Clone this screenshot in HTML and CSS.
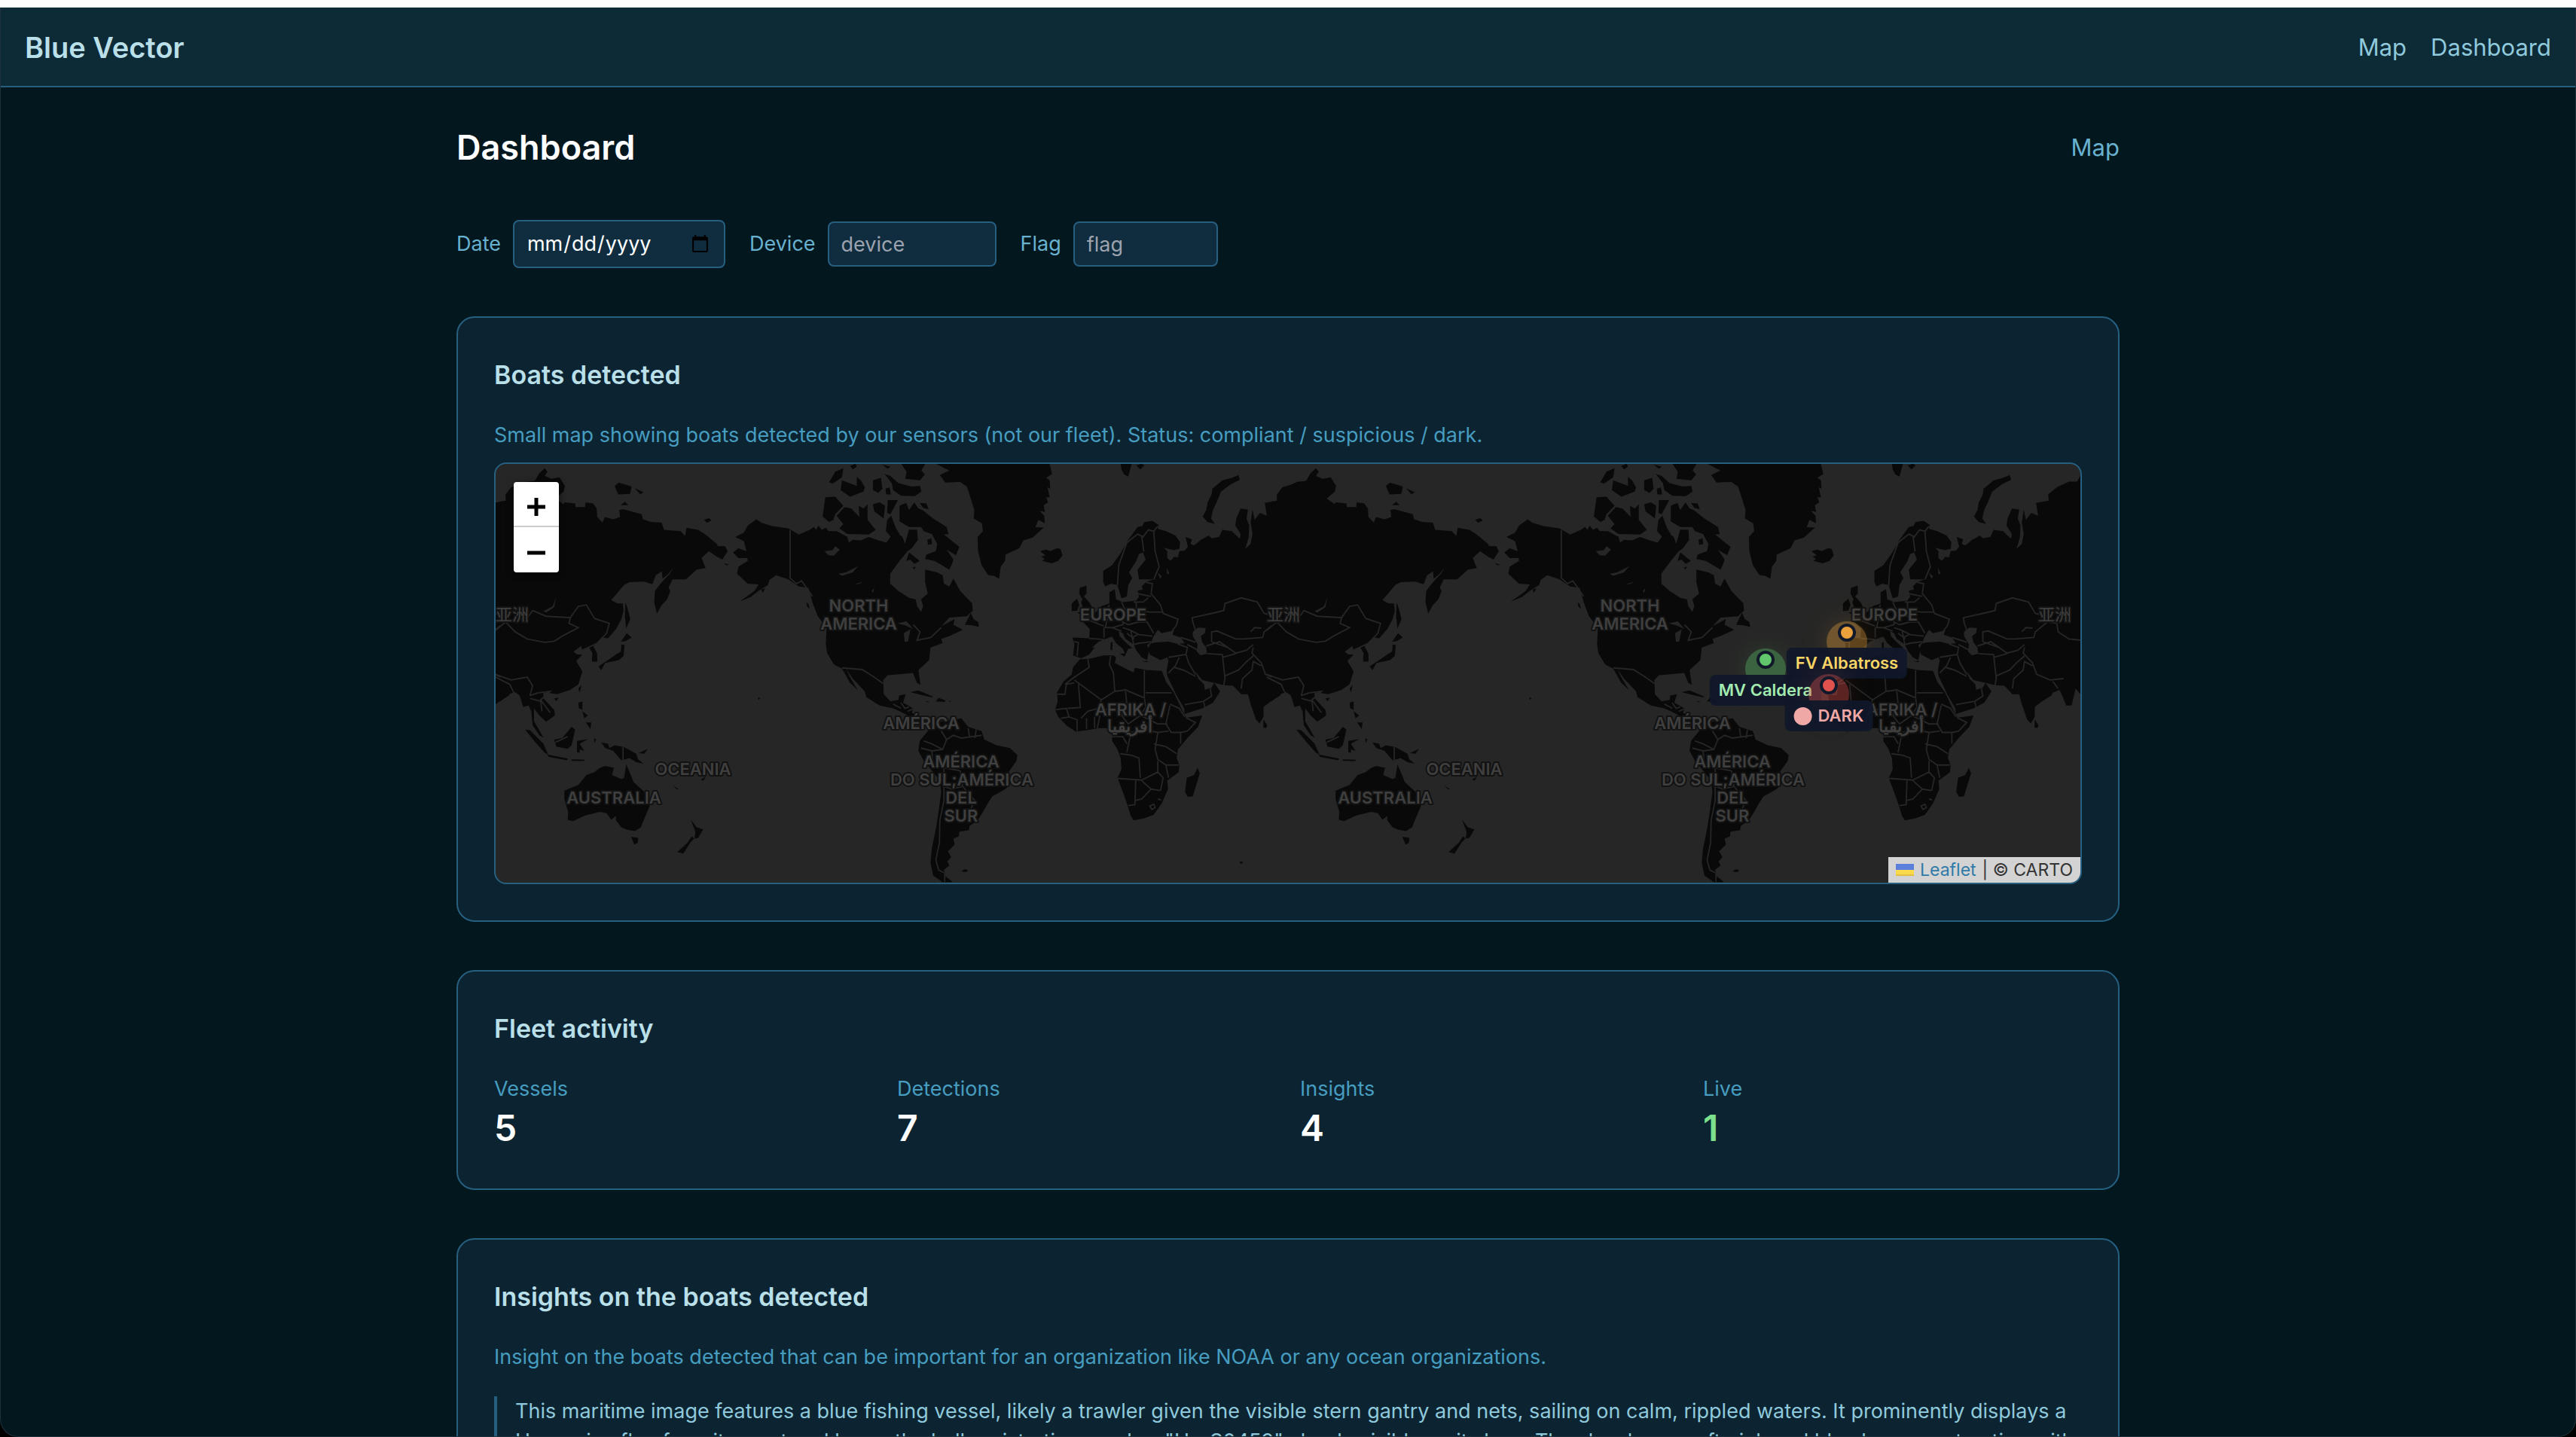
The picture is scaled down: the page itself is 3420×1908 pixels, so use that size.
FILE: index.html
```html
<!DOCTYPE html>
<html lang="en">
<head>
<meta charset="utf-8">
<title>Blue Vector</title>
<link rel="stylesheet" href="styles.css">
</head>
<body>
<div class="app">
  <header class="topbar">
    <a class="brand" href="#">Blue Vector</a>
    <nav class="nav"><a href="#map">Map</a><a href="#dashboard">Dashboard</a></nav>
  </header>
  <main class="page">
    <div class="page-head">
      <h1>Dashboard</h1>
      <a href="#map">Map</a>
    </div>
    <form class="filters">
      <div class="field"><label for="date">Date</label><input class="input input-date" id="date" type="date"></div>
      <div class="field"><label for="device">Device</label><input class="input input-device" id="device" type="text" placeholder="device"></div>
      <div class="field"><label for="flag">Flag</label><input class="input input-flag" id="flag" type="text" placeholder="flag"></div>
    </form>

    <section class="card">
      <h2>Boats detected</h2>
      <p class="note">Small map showing boats detected by our sensors (not our fleet). Status: compliant / suspicious / dark.</p>
      <div class="map" id="map">
        <svg class="world" viewBox="0 0 2104 556" preserveAspectRatio="xMidYMid slice" aria-hidden="true">
          <defs>
            <g id="pacific">
              <path d="M40,175 L60,175 60,150 80,125 150,105 175,100 185,75 205,58 215,70 205,85 230,95 260,90 280,120 275,140 245,165 275,185 278,178 318,182 320,195 355,195 356,178 385,182 398,200 400,230 420,250 428,230 460,238 485,230 482,205 495,202 565,220 570,238 600,247 640,250 648,275 710,280 727,297 732,268 775,275 800,290 845,325 848,333 875,333 885,350 865,380 845,370 815,350 788,375 803,410 770,415 730,450 680,450 665,480 672,490 660,520 640,540 622,570 612,530 615,490 640,460 670,430 682,410 665,430 643,448 640,422 618,435 605,467 575,458 520,460 500,470 452,523 475,535 495,535 498,560 490,590 470,625 440,658 420,655 400,675 385,685 400,712 400,740 380,740 382,710 370,690 345,700 340,685 312,705 325,715 345,715 322,738 345,775 330,820 300,840 250,855 215,850 200,850 200,870 240,910 243,930 210,952 185,930 165,905 165,950 180,975 200,1008 185,1000 160,965 155,915 145,895 125,900 112,860 95,848 70,855 40,880Z"/>
              <path d="M913,300 L945,285 960,260 992,238 1010,250 1050,262 1110,270 1150,292 1190,275 1205,265 1215,275 1222,260 1235,275 1250,268 1260,280 1290,280 1330,300 1335,320 1350,310 1380,312 1410,300 1440,310 1475,320 1490,300 1500,245 1519,290 1535,300 1544,325 1559,275 1589,275 1592,310 1569,340 1554,350 1524,385 1489,430 1489,465 1519,490 1559,515 1584,520 1589,545 1604,565 1612,545 1604,520 1629,500 1619,460 1619,415 1664,425 1684,435 1689,465 1709,475 1724,447 1749,490 1794,535 1796,560 1774,580 1709,585 1679,615 1729,590 1724,610 1759,628 1709,650 1679,660 1684,675 1639,690 1634,735 1594,770 1602,822 1589,815 1574,780 1514,785 1480,788 1463,805 1465,855 1490,880 1520,875 1522,860 1547,855 1537,885 1574,905 1570,922 1599,930 1620,950 1614,960 1554,930 1524,915 1500,905 1450,895 1400,865 1395,845 1350,800 1325,765 1340,795 1368,840 1340,815 1310,765 1280,750 1255,710 1250,680 1253,620 1220,580 1200,530 1185,480 1150,475 1110,450 1065,435 1040,452 1035,470 1000,490 970,512 930,528 985,490 1000,468 960,465 920,430 925,405 960,385 958,375 925,375 905,355 925,340 955,350 945,315Z"/>
              <path d="M1248,160 L1285,158 1315,190 1285,220 1278,240 1262,247 1238,228ZM1290,225 L1320,195 1345,200 1375,230 1372,190 1390,200 1405,185 1405,240 1435,275 1410,292 1330,290 1300,270 1315,255ZM1310,100 L1365,120 1365,88 1380,100 1395,125 1390,140 1340,158 1305,135ZM1262,107 L1285,70 1315,58 1310,90 1275,112ZM1340,50 L1360,42 1365,52 1350,62ZM1425,100 L1455,92 1460,130 1445,145 1425,135ZM1468,78 L1490,85 1520,110 1568,122 1600,120 1605,140 1580,156 1530,155 1500,135 1495,110ZM1530,42 L1620,42 1605,65 1618,80 1600,100 1545,95 1550,70ZM1472,130 L1487,125 1492,150 1474,150ZM1425,185 L1450,178 1470,190 1465,235 1430,210ZM1480,170 L1518,170 1490,220 1478,215ZM1478,240 L1493,225 1508,265 1493,300 1473,280ZM1460,45 L1490,52 1480,60ZM1178,530 L1186,538 1190,555 1180,545ZM1010,485 L1025,482 1015,497ZM870,392 L890,398 880,400ZM998,866 L1006,870 1000,875Z"/>
              <path d="M505,530 L515,560 523,590 508,623 503,580ZM510,640 L528,655 505,668 488,670ZM490,680 L502,682 498,720 480,735 430,745 415,770 405,757 440,735 470,715 488,705ZM330,835 L342,822 335,850ZM240,870 L257,867 248,880ZM330,885 L345,880 345,910 332,905ZM345,915 L365,930 352,940ZM358,955 L378,955 375,978ZM240,1015 L270,1010 305,970 318,980 305,1035 290,1048 248,1040ZM132,980 L150,982 200,1030 218,1068 205,1062 175,1030ZM215,1068 L290,1082 288,1088 220,1076ZM305,1085 L355,1086 350,1091 305,1090ZM325,1020 L365,1014 335,1030 352,1055 335,1050 335,1062 325,1060ZM388,1010 L396,1015 390,1028ZM415,1025 L440,1030 445,1045 465,1035 500,1042 545,1065 552,1085 572,1100 545,1095 520,1080 490,1088 460,1055 430,1045ZM555,1063 L588,1048 575,1065ZM278,1195 L330,1175 360,1140 390,1130 410,1115 430,1108 462,1115 455,1140 490,1155 500,1150 508,1103 525,1140 535,1165 570,1195 590,1215 595,1250 575,1295 562,1325 540,1338 510,1333 490,1325 470,1300 470,1285 452,1298 435,1275 410,1270 355,1283 310,1303 290,1298 292,1270 278,1225ZM526,1358 L553,1362 550,1380 538,1386ZM748,1298 L770,1325 794,1332 775,1362 762,1365 765,1340ZM752,1356 L760,1365 745,1380 720,1418 698,1412 735,1380ZM682,1177 L702,1190 697,1192ZM785,1157 L805,1145 795,1160ZM797,240 L815,234 825,242 808,250ZM465,120 L480,108 528,122 522,148 478,150ZM540,128 L572,142 560,150ZM488,188 L503,176 515,188ZM605,1062 L612,1068ZM635,1077 L645,1082Z"/>
              <g class="lakes"><path d="M1245,350 L1275,347 1285,333 1302,345 1280,366 1260,365ZM1297,430 L1325,425 1370,403 1350,425 1310,437ZM1355,468 L1388,458 1375,466ZM1420,490 L1430,480 1425,498ZM200,562 L235,545 247,512 240,548 210,567ZM1540,640 L1565,625 1555,670 1543,670ZM1515,605 L1550,598 1575,625 1545,612Z"/></g>
              <g class="borders"><path d="M1117,275 V445 L1140,465 1160,455 1200,510M1310,762 L1385,768 1425,792 1463,817M145,580 L160,560 210,580 300,585 295,605 330,620 270,650 240,668 205,672 140,660 95,635 60,600 22,630M300,585 L330,545 360,540 390,588 445,605 435,640 400,675 345,700M22,785 L80,805 140,795 160,825 150,860M22,795 L75,820 90,850M150,860 L180,850 225,845 190,875 225,920M150,870 L190,880 195,915M496,1042 V1088M245,1025 L290,1005M1500,890 L1530,905M1575,610 L1600,635 1589,665 1640,655 1679,620"/></g>
            </g>
            <g id="atlantic">
              <path d="M175,42 L225,66 190,82 210,108 265,106 290,122 300,150 318,205 316,235 346,252 350,280 330,300 332,350 345,400 370,435 390,437 410,448 416,405 432,385 434,362 485,340 500,312 535,302 576,267 545,266 556,240 580,252 578,225 560,208 580,212 576,188 592,178 585,160 598,160 590,125 600,130 598,100 585,92 607,78 598,42ZM563,350 L585,345 600,350 625,340 638,342 646,365 630,385 605,393 570,385 580,378 567,370 582,365ZM862,42 L903,42 890,87 875,80 865,62ZM920,48 L940,42 950,48 935,62ZM1300,82 L1305,98 1270,115 1235,140 1220,175 1205,205 1198,235 1212,254 1185,248 1167,228 1180,205 1185,178 1200,150 1203,130 1240,100 1275,92Z"/>
              <path d="M797,420 L830,400 860,360 890,310 925,265 942,262 950,248 980,243 1003,258 1000,272 1030,280 1065,295 1083,318 1080,342 1060,347 1022,338 1035,350 1035,375 1048,385 1060,370 1075,372 1080,350 1100,348 1112,335 1103,300 1127,308 1122,325 1135,330 1160,310 1190,295 1200,305 1228,300 1240,275 1275,280 1305,307 1308,290 1288,260 1292,235 1308,200 1335,203 1330,235 1340,260 1338,300 1325,343 1345,325 1352,290 1345,250 1352,203 1360,240 1380,215 1405,225 1398,180 1445,172 1443,150 1475,125 1520,105 1550,105 1568,75 1568,860 1545,835 1530,895 1510,895 1495,860 1485,840 1460,850 1455,860 1420,880 1393,900 1393,935 1378,958 1365,945 1345,890 1335,855 1310,855 1280,825 1245,823 1210,815 1165,805 1140,775 1150,800 1172,820 1175,840 1200,832 1210,815 1232,845 1205,885 1165,905 1100,925 1098,905 1070,860 1045,810 1035,790 1033,770 1040,735 1035,725 1010,735 970,715 965,690 975,675 1000,672 1040,670 1075,678 1100,675 1085,655 1055,645 1060,630 1015,640 1000,628 985,650 975,672 960,682 968,700 960,735 940,725 920,700 910,680 880,660 870,640 855,632 858,650 880,672 905,692 890,695 880,715 870,695 845,675 830,652 800,662 780,670 755,690 765,690 745,715 715,728 685,718 690,680 683,655 745,658 747,625 722,600 745,585 765,570 790,545 820,535 820,495 840,485 845,520 870,530 920,525 930,510 925,490 945,485 940,475 955,460 985,450 930,450 925,415 955,380 945,355 930,360 920,385 893,425 905,445 890,470 885,510 865,517 850,470 825,465 805,475 797,460ZM710,480 L735,472 735,500 725,510 745,530 762,560 720,575 700,568 725,560 715,530 720,520 708,500ZM680,535 L700,518 708,540 700,560 680,562ZM825,672 L832,672 831,700 824,698ZM858,712 L882,710 876,722ZM940,738 L965,738 960,742Z"/>
              <path d="M710,732 L745,730 800,718 835,718 845,725 840,745 880,765 910,778 915,762 960,770 1015,773 1030,810 1060,850 1085,900 1105,938 1165,930 1150,970 1110,1010 1075,1050 1070,1080 1080,1105 1078,1130 1035,1160 1038,1190 1015,1240 985,1280 950,1293 910,1300 900,1285 885,1240 870,1200 850,1150 865,1120 862,1080 850,1050 830,1020 832,985 810,975 780,975 750,980 695,987 660,965 630,935 618,910 628,880 625,850 650,810 680,785 685,760ZM1148,1115 L1156,1135 1130,1215 1112,1218 1101,1200 1108,1150 1135,1140ZM1393,945 L1407,965 1403,975 1392,973ZM1303,1445 L1318,1447 1310,1455Z"/>
              <path d="M145,985 L165,960 200,950 270,940 295,970 345,985 355,1015 400,1035 450,1045 478,1070 475,1090 445,1130 440,1185 415,1200 385,1215 368,1240 350,1270 330,1300 300,1320 298,1335 262,1340 260,1357 240,1365 245,1385 220,1410 232,1430 218,1445 225,1460 205,1475 208,1495 238,1518 200,1518 165,1495 155,1450 160,1400 175,1330 185,1270 195,1200 190,1160 165,1130 130,1090 110,1055 115,1020ZM270,1480 L280,1473 295,1475 288,1483ZM283,610 L305,568 315,590 332,600 335,618 310,612ZM80,848 L110,842 160,862 165,867 130,860ZM175,880 L185,868 212,878 205,882ZM222,879 L232,879 228,882ZM135,880 L150,880 145,883ZM133,825 L138,832Z"/>
              <path d="M40,190 L65,180 75,205 95,178 110,200 125,205 165,235 215,265 222,290 205,292 262,335 250,365 215,345 240,380 235,395 225,415 170,385 135,378 140,362 175,350 180,325 160,290 130,280 120,265 75,265 40,245ZM115,180 L140,182 148,202 128,198ZM65,385 L75,355 115,385 95,395 80,380ZM143,310 L158,305 161,325 146,328ZM88,408 L100,405 95,415ZM0,275 L20,260 40,290 20,320ZM75,275 L105,275 105,315 75,345Z"/>
              <g class="lakes"><path d="M1130,635 L1150,620 1178,622 1175,640 1160,650 1165,672 1180,690 1183,712 1160,718 1145,705 1148,680 1130,650ZM1000,425 L1015,440 1008,447ZM1033,408 L1043,430 1035,432Z"/></g>
              <g class="borders"><path d="M850,470 L855,400 885,320 925,290 945,300 965,275 985,280 1000,262M940,295 L948,352M985,280 L990,350 1005,405 985,450M955,460 L980,465 975,500 1010,540 1020,570 1075,590 1070,610 1050,637M925,500 L975,510M910,530 L945,530 965,515M920,530 L920,560 970,565 1018,565M820,540 L808,560 815,580 805,620 830,620 870,610 870,590 840,580M870,600 L890,610 930,600 920,580 880,560 865,530M930,600 L960,600 985,640M800,620 L800,655M830,620 L865,632M870,620 L900,630 910,680 930,675 975,670M900,630 L930,645 980,650M905,655 L925,645M885,640 L912,660M705,670 L700,720M688,670 L705,672M745,658 L800,662M747,595 L800,615M1040,725 L1105,715 1110,690 1075,678M1060,760 L1095,770 1140,792M1105,715 L1115,745 1140,785M1040,780 L1065,755 1080,725M1100,892 L1170,880 1200,862 1195,835M1170,880 L1175,900M1085,655 L1120,665 1140,672M1110,680 L1150,700M1130,600 L1128,585 1200,570 1245,560 1250,535 1310,515 1370,530 1395,570 1440,580M1130,600 L1140,630M1200,670 V635 L1220,632 1290,660 1320,660 1390,655 1395,635 1440,600 1475,605 1480,635 1520,660 1568,665M1180,685 L1230,670 1290,710 1330,700 1355,680M1345,635 L1360,620 1385,622M1200,670 L1260,690M1183,712 L1240,715 1250,800 1245,823M1240,725 L1290,712M1250,790 L1300,770 1330,740 1355,720M1310,835 L1315,800 1350,770 1355,740 1385,755M1355,690 L1350,710 1385,745 1400,785 1450,805 1500,800M1460,810 L1480,835"/></g>
              <g class="borders"><path d="M740,732 L745,760 690,795 655,820M690,805 L790,875 840,845 835,780 820,750 825,720M840,845 L880,840 950,868 V770M955,850 H1052M705,820 L712,902 665,905M625,855 L655,855 660,820 690,815M790,875 L780,905 740,915 715,940M880,845 L885,890 865,930M950,868 L955,900 935,930 1000,960 1035,960M865,930 L890,960 935,930M780,905 L865,915M1045,895 L1030,960 1050,990 1085,990M1045,890 L1080,905 1100,935M1105,938 L1140,955 1110,985 1085,990 V1030M1000,990 L990,1050 1000,1085 1030,1105 1078,1105M985,1030 L1030,1040 1070,1065M860,1065 L900,1070 930,1080 935,1150M850,1152 L940,1158 1000,1130 1000,1090M918,1160 L915,1245 890,1248M915,1230 L940,1225 975,1190 1010,1195M940,1160 L975,1190M1000,1130 L1020,1150 1010,1195M1030,1105 L1040,1150M885,1060 L900,990 950,980 1000,990 1040,985M830,1005 L870,1005 885,1030M735,940 V978M765,935 V975M785,930 L775,975M618,910 L660,905 670,935 700,945 700,985M640,940 L670,935M970,1250 L985,1243 990,1255 978,1262ZM1000,1225 L1012,1228"/></g>
              <g class="borders"><path d="M195,985 L215,1015 200,1050 160,1055 120,1045M215,1015 L240,1000 270,1010 345,1000M295,975 L300,1005M325,980 L320,1010M130,1020 L160,1030 200,1050M160,1055 L165,1100 205,1115M205,1115 L265,1125 275,1180 235,1190M275,1180 L300,1210 320,1230 300,1270 330,1290M205,1115 V1180 L235,1190M205,1180 L205,1230 190,1300 188,1380 175,1440 185,1475 205,1485M208,1485 V1518M45,885 L60,905 75,900M70,915 L95,905"/></g>
            </g>
            <g id="names">
              <text x="482" y="196">NORTH</text><text x="482" y="220">AMERICA</text>
              <text x="262" y="413">OCEANIA</text><text x="157" y="451">AUSTRALIA</text>
              <text x="565" y="352">AMÉRICA</text><text x="618" y="403">AMÉRICA</text>
              <text x="619" y="427">DO SUL;AMÉRICA</text><text x="618" y="451">DEL</text><text x="618" y="475">SUR</text>
              <text x="820" y="208">EUROPE</text><text x="843" y="334">AFRIKA /</text>
              <text x="842" y="356">أفريقيا</text><text class="thin" x="22" y="208">亚洲</text><text class="thin" x="1046" y="208">亚洲</text>
            </g>
          </defs>
          <g class="land" transform="translate(-8 -16) scale(.35714 .37628)">
            <use href="#atlantic" x="-1383"/><use href="#pacific"/><use href="#atlantic" x="1484"/>
            <use href="#pacific" x="2867"/><use href="#atlantic" x="4351"/>
          </g>
          <g class="names"><use href="#names"/><use href="#names" x="1024"/></g>
        </svg>
        <div class="marker marker-ok"><i class="halo"></i><i class="dot"></i><span class="tag">MV Caldera</span></div>
        <div class="marker marker-warn"><i class="halo"></i><i class="dot"></i><span class="tag">FV Albatross</span></div>
        <div class="marker marker-dark"><i class="halo"></i><i class="dot"></i><span class="tag"><i class="disc"></i>DARK</span></div>
        <div class="zoom">
          <button type="button" aria-label="Zoom in"><svg viewBox="0 0 24 24"><path d="M0 12H24M12 0V24"/></svg></button>
          <button type="button" aria-label="Zoom out"><svg viewBox="0 0 24 24"><path d="M0 12H24"/></svg></button>
        </div>
        <div class="credit">
          <a href="#leaflet"><svg viewBox="0 0 24 16"><path fill="#5a7fdc" d="M0 0h24v8H0z"/><path fill="#fada4a" d="M0 8h24v6H0z"/><path fill="#e2bf3c" d="M0 14h24v2H0z"/></svg>Leaflet</a>
          <span>| © CARTO</span>
        </div>
      </div>
    </section>

    <section class="card">
      <h2>Fleet activity</h2>
      <dl class="stats">
        <div><dt>Vessels</dt><dd>5</dd></div>
        <div><dt>Detections</dt><dd>7</dd></div>
        <div><dt>Insights</dt><dd>4</dd></div>
        <div><dt>Live</dt><dd class="live">1</dd></div>
      </dl>
    </section>

    <section class="card">
      <h2>Insights on the boats detected</h2>
      <p class="note note-wide">Insight on the boats detected that can be important for an organization like NOAA or any ocean organizations.</p>
      <blockquote class="insight">This maritime image features a blue fishing vessel, likely a trawler given the visible stern gantry and nets, sailing on calm, rippled waters. It prominently displays a<br>Hungarian flag from its mast and bears the hull registration number "Hu-S0459" clearly visible on its bow. The sky shows soft pink and blue hues, contrasting with</blockquote>
    </section>
  </main>
</div>
</body>
</html>
```
FILE: styles.css
```css
* { box-sizing: border-box; }

html { background: #000; }

body {
  margin: 0;
  height: 100vh;
  padding-top: 10px;
  background: linear-gradient(#fdfdfd 50%, #000 50%);
  font-family: Inter, "Noto Sans CJK SC", sans-serif;
  font-size: 31px;
  line-height: 48px;
  color: #fff;
}

h1, h2, p, dl, dd, blockquote { margin: 0; }
a { color: inherit; text-decoration: none; }

.app {
  height: 100%;
  overflow: hidden;
  background: #03171f;
  border: 1px solid #1d323c;
  border-top: 0;
  border-radius: 0 0 24px 24px;
}

.topbar {
  display: flex;
  align-items: center;
  justify-content: space-between;
  height: 106px;
  padding: 2px 32px 0;
  background: #0d2a37;
  border-bottom: 2px solid #275f80;
}

.brand { font-size: 38px; font-weight: 600; color: #b9dfe9; }
.nav { display: flex; gap: 32px; color: #8fc9dc; }

.page {
  max-width: 2304px;
  margin: 0 auto;
  padding: 48px;
  display: flex;
  flex-direction: column;
  gap: 64px;
}

.page-head {
  display: flex;
  align-items: center;
  justify-content: space-between;
  color: #68b2d0;
}

h1 { font-size: 45px; line-height: 64px; font-weight: 600; color: #fff; }

.filters { display: flex; align-items: center; gap: 32px; }
.field { display: flex; align-items: center; gap: 16px; }
.field label { font-size: 27px; line-height: 40px; color: #68b2d0; }

.input {
  height: 60px;
  padding: 8px 16px;
  border: 2px solid #275f80;
  border-radius: 8px;
  background: #102d3f;
  color: #fff;
  font: inherit;
  font-size: 27px;
  line-height: 40px;
}
.input::placeholder { color: #9ca3af; opacity: 1; }
.input-date { width: 282px; height: 64px; }
.input-device { width: 224px; }
.input-flag { width: 192px; }

.card {
  padding: 48px;
  background: #0c2431;
  border: 2px solid #275f80;
  border-radius: 24px;
}

h2 {
  margin-bottom: 32px;
  font-size: 34px;
  line-height: 56px;
  font-weight: 600;
  color: #b9dfe9;
}

.note {
  margin-bottom: 16px;
  font-size: 27px;
  line-height: 40px;
  color: #469dc0;
}
.note-wide { margin-bottom: 32px; }

.map {
  position: relative;
  height: 560px;
  overflow: hidden;
  background: #262626;
  border: 2px solid #275f80;
  border-radius: 16px;
}

.world { display: block; width: 100%; height: 100%; }
.land { fill: #090909; }
.lakes { fill: #262626; }
.borders { fill: none; stroke: #262626; }
.borders path { stroke-width: 5; }
.names {
  fill: #3f3f3f;
  stroke: #121212;
  stroke-width: 4px;
  stroke-linejoin: round;
  paint-order: stroke;
  font-size: 22px;
  font-weight: 600;
  text-anchor: middle;
}
.thin { font-weight: 400; }

.marker { position: absolute; width: 0; height: 0; }
.marker-ok { left: calc(50% + 634px); top: 260px; --c: #62c66c; --t: #a3ecb0; }
.marker-warn { left: calc(50% + 742px); top: 224px; --c: #eaa13b; --t: #f9d766; }
.marker-dark { left: calc(50% + 718px); top: 294px; --c: #e0524d; --t: #f0a8a7; }

.halo, .dot { position: absolute; border-radius: 50%; }
.halo {
  left: -27px;
  top: -15px;
  width: 54px;
  height: 54px;
  background: var(--c);
  box-shadow: 0 0 32px rgb(from var(--c) r g b / 40%);
  opacity: .38;
}
.dot {
  left: -12px;
  top: -12px;
  width: 24px;
  height: 24px;
  background: var(--c);
  border: 4px solid #101829;
}
.tag {
  position: absolute;
  left: 0;
  top: 20px;
  transform: translateX(-50%);
  display: flex;
  align-items: center;
  gap: 8px;
  padding: 0 12px;
  border-radius: 8px;
  background: rgb(16 23 41 / 95%);
  color: var(--t);
  font-size: 22px;
  line-height: 41px;
  font-weight: 600;
  white-space: nowrap;
}
.disc { width: 24px; height: 24px; border-radius: 50%; background: var(--t); }

.zoom {
  position: absolute;
  left: 24px;
  top: 24px;
  border-radius: 4px;
  overflow: hidden;
  box-shadow: 0 2px 10px rgb(0 0 0 / 65%);
}
.zoom button {
  display: flex;
  align-items: center;
  justify-content: center;
  width: 60px;
  height: 60px;
  padding: 8px 0 0;
  border: 0;
  background: #fff;
}
.zoom button:first-child { border-bottom: 2px solid #ccc; }
.zoom svg { width: 24px; height: 24px; fill: none; stroke: #000; stroke-width: 5; }

.credit {
  position: absolute;
  right: 0;
  bottom: 0;
  display: flex;
  gap: 8px;
  padding: 0 10px;
  background: rgb(255 255 255 / 80%);
  color: #333;
  font-size: 23px;
  line-height: 34px;
}
.credit a { display: flex; align-items: center; gap: 8px; color: #2f7aa8; }
.credit svg { width: 24px; height: 16px; }

.stats { display: grid; grid-template-columns: repeat(4, 1fr); gap: 32px; }
.stats dt { font-size: 27px; line-height: 40px; color: #469dc0; }
.stats dd { font-size: 48px; line-height: 64px; font-weight: 600; }
.stats .live { color: #7de08d; }

.insight {
  padding-left: 24px;
  border-left: 4px solid #275f80;
  font-size: 27px;
  line-height: 40px;
  color: #8fc9dc;
  white-space: nowrap;
}
```
